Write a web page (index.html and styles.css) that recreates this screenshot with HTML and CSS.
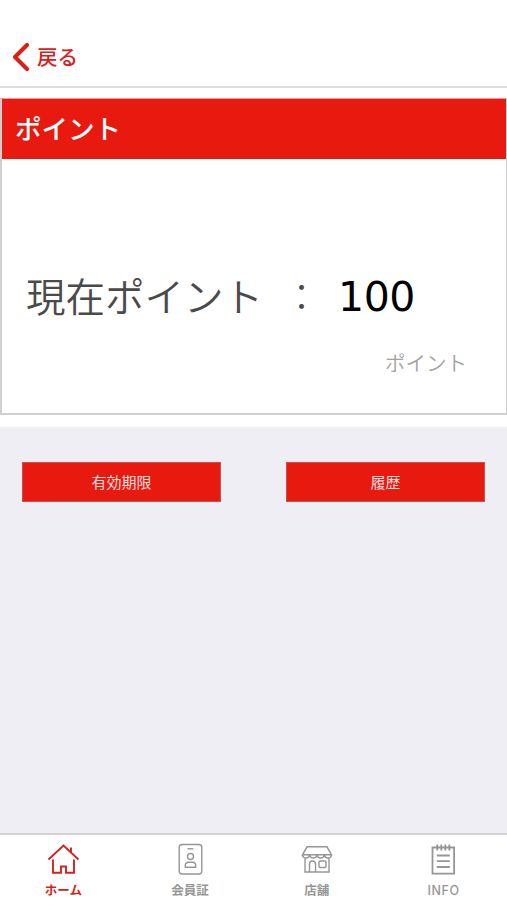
FILE: index.html
```html
<!DOCTYPE html>
<html lang="ja">
<head>
<meta charset="utf-8">
<meta name="viewport" content="width=device-width">
<title>ポイント</title>
<link rel="stylesheet" href="styles.css">
</head>
<body>
<div class="app">
  <header class="nav">
    <a class="back">
      <svg class="chevron" width="18" height="30" viewBox="0 0 18 30"><path d="M15 3 L3 15 L15 27"/></svg>
      <span>戻る</span>
    </a>
  </header>
  <section class="panel">
    <div class="card">
      <h1 class="card-title">ポイント</h1>
      <div class="card-body">
        <div class="balance">
          <span class="label">現在ポイント</span>
          <span class="colon">：</span>
          <span class="value">100</span>
        </div>
        <div class="unit">ポイント</div>
      </div>
    </div>
  </section>
  <main class="actions">
    <button class="action">有効期限</button>
    <button class="action">履歴</button>
  </main>
  <nav class="tabs">
    <a class="tab active">
      <svg width="34" height="34" viewBox="0 0 34 34"><path d="M2.5 17.5 L17.5 3.5 L32.5 17.5 M25 10.5 V5.5 M7 17.5 V30.7 H15 V24.5 H20 V30.7 H28 V17.5"/></svg>
      <span>ホーム</span>
    </a>
    <a class="tab">
      <svg width="34" height="34" viewBox="0 0 34 34"><rect x="6.2" y="2.5" width="22.6" height="29.5" rx="3"/><path d="M14.5 6.8 H20.5"/><circle cx="17.5" cy="14.5" r="3"/><path d="M12.3 25.3 V23.5 Q12.3 20.2 15.5 20.2 H19.5 Q22.7 20.2 22.7 23.5 V25.3 Z"/></svg>
      <span>会員証</span>
    </a>
    <a class="tab">
      <svg width="34" height="34" viewBox="0 0 34 34"><path d="M7 4.8 H27 L31.5 12.8 H2.5 Z M2.5 12.8 Q2.7 16 6 16 Q9.2 16 9.7 12.8 Q10.2 16 13.3 16 Q16.5 16 17 12.8 Q17.5 16 20.7 16 Q23.8 16 24.3 12.8 Q24.8 16 28 16 Q31.3 16 31.5 12.8 M5 16 V30 H29 V16 M9.5 30 V22 Q9.5 19 12.5 19 Q15.5 19 15.5 22 V30"/><rect x="19" y="19" width="7" height="6.5" rx="1.2"/></svg>
      <span>店舗</span>
    </a>
    <a class="tab">
      <svg width="34" height="34" viewBox="0 0 34 34"><path class="bold" d="M5.5 5.5 H27.1 V31.7 H5.5 Z M10.3 2.5 V8.5 M14.3 2.5 V8.5 M18.3 2.5 V8.5 M22.3 2.5 V8.5 M9.8 13.5 H22.8 M9.8 19.2 H22.8 M9.8 25 H22.8"/></svg>
      <span class="latin">INFO</span>
    </a>
  </nav>
</div>
</body>
</html>
```
FILE: styles.css
```css
* { box-sizing: border-box; }
body {
  margin: 0;
  font-family: "Noto Sans CJK JP", sans-serif;
  background: #fff;
}
.app {
  display: flex;
  flex-direction: column;
  height: 900px;
}
.nav {
  height: 88px;
  padding: 28px 0 0 12px;
  border-bottom: 2px solid #dededd;
}
.back {
  display: flex;
  align-items: center;
  height: 58px;
  gap: 7px;
  color: #d7211c;
  font-size: 20.5px;
  font-weight: 500;
  line-height: 30px;
}
.back span { padding-bottom: 2px; }
.chevron {
  fill: none;
  stroke: #d7211c;
  stroke-width: 4.2;
  stroke-linecap: round;
  stroke-linejoin: round;
}
.panel { padding: 10px 0 12px; }
.card {
  height: 317px;
  border: 2px solid #d0d0d0;
  border-top: 1px solid #e89b98;
  border-right-width: 1px;
}
.card-title {
  margin: 0;
  height: 60px;
  padding-left: 13px;
  background: #e81a10;
  color: #fff;
  font-size: 26.5px;
  font-weight: 500;
  line-height: 58px;
}
.card-body { padding: 106px 39px 0 24px; }
.balance {
  display: flex;
  align-items: center;
  height: 60px;
  font-size: 39.5px;
  line-height: 60px;
  font-weight: 350;
  color: #4a4a4a;
}
.label { width: 257px; white-space: nowrap; }
.colon { width: 55px; font-size: 37px; font-weight: 300; }
.value {
  padding-top: 4px;
  font-family: "DejaVu Sans", sans-serif;
  font-size: 41px;
  font-weight: 400;
  letter-spacing: -.4px;
  color: #000;
}
.unit {
  margin-top: 22px;
  text-align: right;
  font-size: 20.5px;
  line-height: 30px;
  font-weight: 350;
  color: #a3a3a3;
}
.actions {
  flex: 1;
  display: flex;
  justify-content: space-between;
  align-items: flex-start;
  padding: 35px 22px 0 22px;
  background: #efeef4;
}
.action {
  width: 199px;
  height: 40px;
  padding: 0;
  border: 1px solid #c4524d;
  background: #e81a10;
  color: #ffdfdc;
  font: 400 15px/24px "Noto Sans CJK JP", sans-serif;
}
.tabs {
  display: grid;
  grid-template-columns: repeat(4, 1fr);
  height: 67px;
  border-top: 2px solid #d3d3d6;
  background: #fff;
}
.tab {
  display: flex;
  flex-direction: column;
  align-items: center;
  padding-top: 7px;
  color: #969696;
  font-size: 12.5px;
  font-weight: 700;
  line-height: 18px;
}
.tab svg {
  fill: none;
  stroke: currentColor;
  stroke-width: 1.4;
}
.tab span { margin-top: 5px; }
.tab .bold { stroke-width: 1.8; }
.tab .latin {
  margin-top: 6px;
  font-family: Inter, sans-serif;
  font-weight: 500;
  letter-spacing: .6px;
}
.tab.active { color: #d7211c; }
.active svg { stroke-width: 1.9; }
```
